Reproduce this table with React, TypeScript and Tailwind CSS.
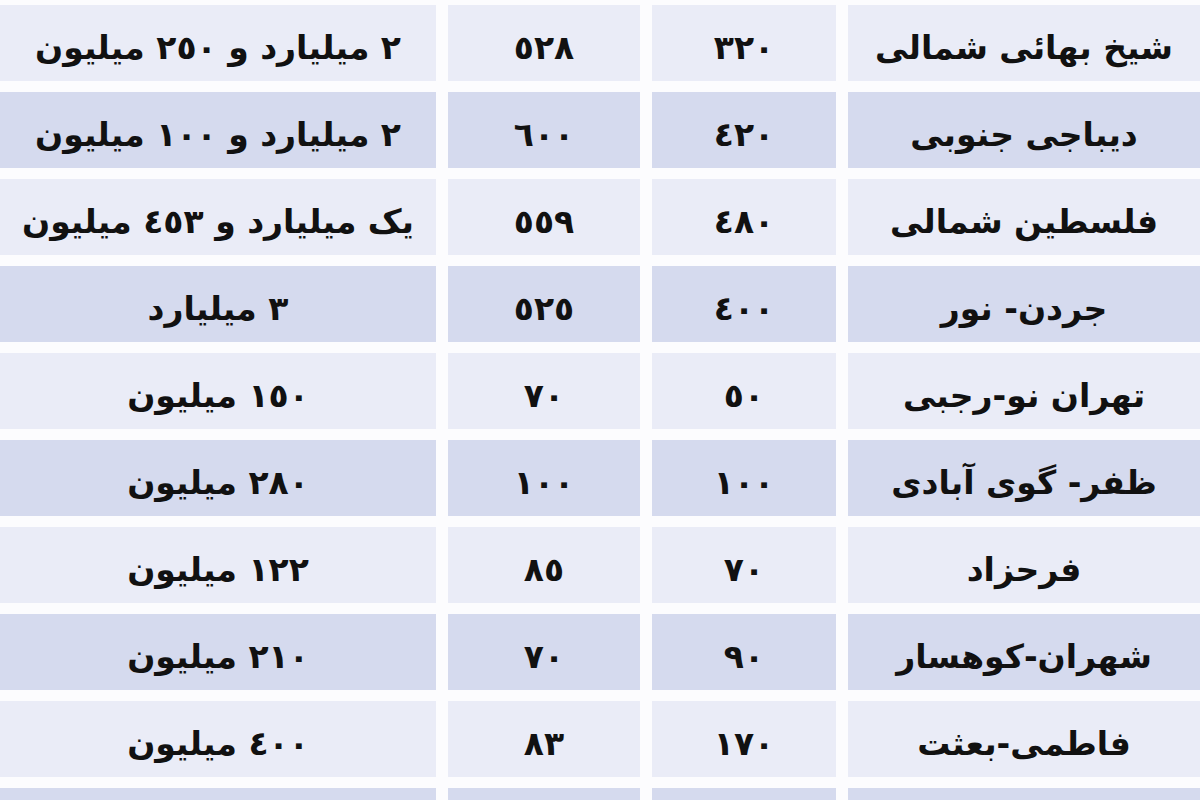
const rows: [string, string, string, string][] = [
  ["٢ میلیارد و ٢٥٠ میلیون", "٥٢٨", "٣٢٠", "شیخ بهائی شمالی"],
  ["٢ میلیارد و ١٠٠ میلیون", "٦٠٠", "٤٢٠", "دیباجی جنوبی"],
  ["یک میلیارد و ٤٥٣ میلیون", "٥٥٩", "٤٨٠", "فلسطین شمالی"],
  ["٣ میلیارد", "٥٢٥", "٤٠٠", "جردن- نور"],
  ["١٥٠ میلیون", "٧٠", "٥٠", "تهران نو-رجبی"],
  ["٢٨٠ میلیون", "١٠٠", "١٠٠", "ظفر- گوی آبادی"],
  ["١٢٢ میلیون", "٨٥", "٧٠", "فرحزاد"],
  ["٢١٠ میلیون", "٧٠", "٩٠", "شهران-کوهسار"],
  ["٤٠٠ میلیون", "٨٣", "١٧٠", "فاطمی-بعثت"],
  ["", "", "", ""],
]

export default function App() {
  return (
    <div className="w-[1200px] h-[800px] overflow-hidden bg-[#fcfcfe] pt-[5px] font-['DejaVu_Sans',sans-serif]">
      <div className="flex flex-col gap-y-[11px]">
        {rows.map((r, i) => {
          const bg = i % 2 === 0 ? "bg-[#eaecf7]" : "bg-[#d5daee]"
          return (
            <div key={i} className="grid grid-cols-[436px_192px_184px_352px] gap-x-3 h-[76px]">
              {r.map((t, j) => (
                <div
                  key={j}
                  dir="rtl"
                  className={`${bg} flex items-center justify-center pt-[10px] text-[33px] font-bold text-[#111] whitespace-nowrap`}
                >
                  {t}
                </div>
              ))}
            </div>
          )
        })}
      </div>
    </div>
  )
}
